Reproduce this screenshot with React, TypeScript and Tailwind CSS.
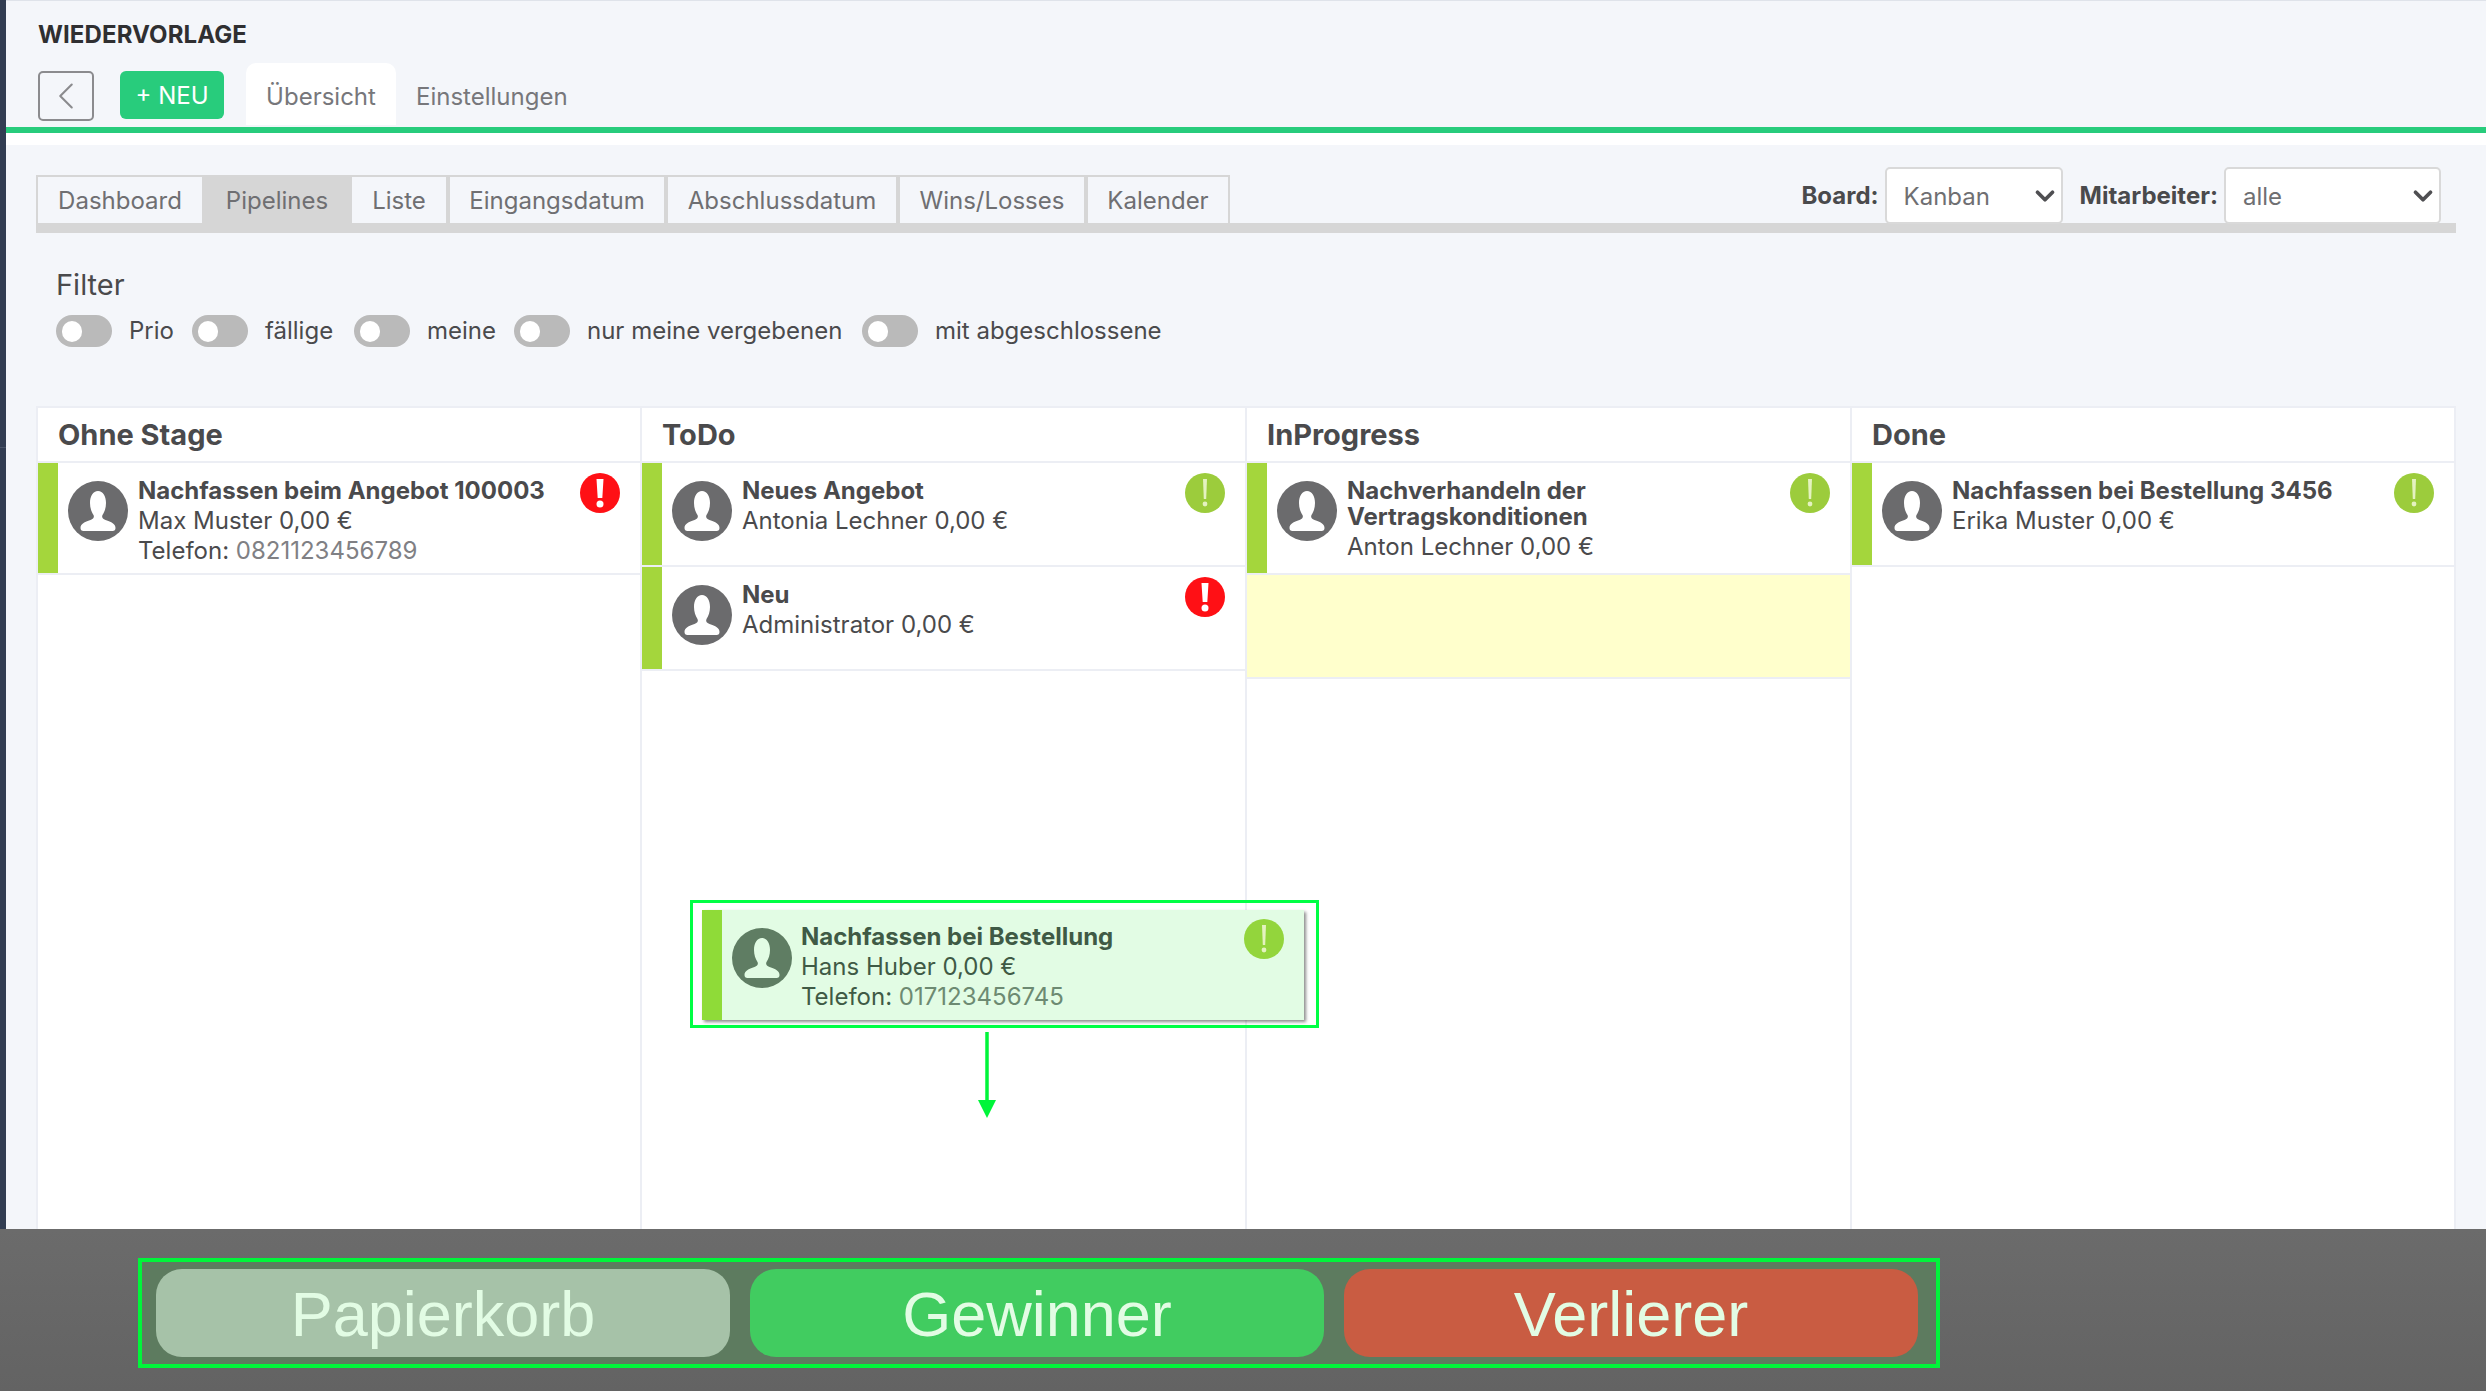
import { ChevronDown, ChevronLeft } from "lucide-react";

const mainTabs = [
  { label: "Dashboard", cls: "w-[164px] bg-[#f4f6fa]" },
  { label: "Pipelines", cls: "w-[150px] bg-[#d6d6d6]" },
  { label: "Liste", cls: "w-[94px] mr-[4px] bg-[#f4f6fa]" },
  { label: "Eingangsdatum", cls: "w-[214px] mr-[4px] bg-[#f4f6fa]" },
  { label: "Abschlussdatum", cls: "w-[228px] mr-[4px] bg-[#f4f6fa]" },
  { label: "Wins/Losses", cls: "w-[184px] mr-[4px] bg-[#f4f6fa]" },
  { label: "Kalender", cls: "w-[140px] bg-[#f4f6fa]" },
];

const filters = [
  { label: "Prio", cls: "w-[63px]" },
  { label: "fällige", cls: "w-[89px]" },
  { label: "meine", cls: "w-[87px]" },
  { label: "nur meine vergebenen", cls: "w-[275px]" },
  { label: "mit abgeschlossene", cls: "" },
];

type CardData = {
  title: string;
  person: string;
  phone?: string;
  urgent?: boolean;
  tall?: boolean;
};

const columns: { name: string; cards: CardData[]; drop?: boolean }[] = [
  {
    name: "Ohne Stage",
    cards: [
      { title: "Nachfassen beim Angebot 100003", person: "Max Muster 0,00 €", phone: "0821123456789", urgent: true, tall: true },
    ],
  },
  {
    name: "ToDo",
    cards: [
      { title: "Neues Angebot", person: "Antonia Lechner 0,00 €" },
      { title: "Neu", person: "Administrator 0,00 €", urgent: true },
    ],
  },
  {
    name: "InProgress",
    cards: [{ title: "Nachverhandeln der Vertragskonditionen", person: "Anton Lechner 0,00 €", tall: true }],
    drop: true,
  },
  {
    name: "Done",
    cards: [{ title: "Nachfassen bei Bestellung 3456", person: "Erika Muster 0,00 €" }],
  },
];

function Avatar({ fill = "#6b6b6d", cut = "#ffffff" }: { fill?: string; cut?: string }) {
  return (
    <svg viewBox="0 0 60 60" className="w-[60px] h-[60px] shrink-0">
      <circle cx="30" cy="30" r="30" fill={fill} />
      <path
        d="M30 10c-5 0-8 5-8 12 0 5 1.500 9 3.500 12 1 2 0 4-3 5-6 2-10 4-10 8 0 2 1 3 3 3h29c2 0 3-1 3-3 0-4-4-6-10-8-3-1-4-3-3-5 2-3 3.500-7 3.500-12 0-7-3-12-8-12z"
        fill={cut}
      />
    </svg>
  );
}

function Alert({ color, bold }: { color: string; bold?: boolean }) {
  return (
    <svg viewBox="0 0 40 40" className="w-[40px] h-[40px] shrink-0">
      <circle cx="20" cy="20" r="20" fill={color} />
      {bold ? (
        <>
          <path d="M16.500 6h7l-1.200 19h-4.600z" fill="#ffffff" />
          <circle cx="20" cy="31" r="3.500" fill="#ffffff" />
        </>
      ) : (
        <>
          <path d="M18 6h4l-.8 20h-2.400z" fill="#e4f2c0" />
          <circle cx="20" cy="31" r="2.400" fill="#e4f2c0" />
        </>
      )}
    </svg>
  );
}

function Card({ card }: { card: CardData }) {
  return (
    <div className={`flex bg-white border-b-2 border-[#eceef4] ${card.tall ? "h-[112px]" : "h-[104px]"}`}>
      <div className="w-[20px] bg-[#a4d63c]" />
      <div className="ml-[10px] mt-[18px]">
        <Avatar />
      </div>
      <div className="ml-[10px] mt-[15px] flex-1 text-[24px] leading-[29.5px] text-[#4a4a4c]">
        <div className="font-bold leading-[26px] mb-[2px] max-w-[420px]">{card.title}</div>
        <div>{card.person}</div>
        {card.phone && (
          <div>
            Telefon: <span className="text-[#808084]">{card.phone}</span>
          </div>
        )}
      </div>
      <div className="mt-[10px] mr-[20px]">
        <Alert color={card.urgent ? "#ff1015" : "#9ccc3c"} bold={card.urgent} />
      </div>
    </div>
  );
}

function DragCard() {
  return (
    <div className="absolute left-[652px] top-[492px] w-[629px] h-[128px] border-[3px] border-[#00ff44] pl-[9px] pt-[7px]">
      <div className="flex w-[602px] h-[110px] bg-[#e2fce4] shadow-[2px_2px_3px_rgba(0,0,0,0.45)]">
        <div className="w-[20px] bg-[#8fdb38]" />
        <div className="ml-[10px] mt-[18px]">
          <Avatar fill="#5f7d63" cut="#e2fce4" />
        </div>
        <div className="ml-[9px] mt-[14px] flex-1 text-[24px] leading-[29.5px] text-[#3f5a45]">
          <div className="font-bold leading-[26px] mb-[2px]">Nachfassen bei Bestellung</div>
          <div>Hans Huber 0,00 €</div>
          <div>
            Telefon: <span className="text-[#6d8a72]">017123456745</span>
          </div>
        </div>
        <div className="mt-[9px] mr-[20px]">
          <Alert color="#93d53c" />
        </div>
      </div>
    </div>
  );
}

function Toggle() {
  return (
    <span className="flex items-center w-[56px] h-[32px] rounded-full bg-[#bababa] pl-[6px]">
      <span className="w-[20px] h-[21px] rounded-full bg-white" />
    </span>
  );
}

function SelectBox({ value, cls }: { value: string; cls: string }) {
  return (
    <div className={`relative h-[57px] ${cls}`}>
      <select
        defaultValue={value}
        className="appearance-none w-full h-full bg-white border-2 border-[#d9d9d9] rounded-[5px] pl-[17px] pt-[2px] text-[24px] text-[#6f6f72] outline-none"
      >
        <option>{value}</option>
      </select>
      <ChevronDown
        className="absolute right-[3px] top-[14px] w-[30px] h-[30px] text-[#4f4f52] pointer-events-none"
        strokeWidth={3}
      />
    </div>
  );
}

export default function App() {
  return (
    <div className="relative h-[1391px] w-[2486px] overflow-hidden flex flex-col bg-[#f4f6fa] font-['Inter',sans-serif] antialiased">
      <div className="flex flex-1 min-h-0">
        <div className="w-[6px] shrink-0 bg-[#323d52]">
          <div className="h-[448px] border-b border-[#4a5468]" />
        </div>
        <div className="flex-1 min-w-0 overflow-hidden">
          <div className="border-t border-[#dfe3ea] h-[63px] pl-[32px] pt-[18px]">
            <h1 className="text-[24px] leading-[32px] font-bold text-[#2f2f31] tracking-[0.1px]">WIEDERVORLAGE</h1>
          </div>

          <div className="flex items-end h-[64px] pl-[32px] text-[24px]">
            <button className="flex items-center justify-center w-[56px] h-[50px] mb-[6px] rounded-[5px] border-2 border-[#8b8b8e] text-[#8b8b8e]">
              <ChevronLeft className="w-[46px] h-[46px] shrink-0" strokeWidth={1.1} />
            </button>
            <button className="w-[104px] h-[48px] mb-[8px] ml-[26px] pt-[2px] rounded-[6px] bg-[#28cc7c] text-white">+ NEU</button>
            <div className="flex items-center justify-center w-[150px] h-[62px] mb-[2px] ml-[22px] pt-[5px] rounded-t-[10px] bg-white text-[#77777b]">
              Übersicht
            </div>
            <div className="mb-[2px] h-[62px] pt-[5px] flex items-center ml-[20px] text-[#77777b]">Einstellungen</div>
          </div>
          <div className="h-[6px] bg-[#28cc7c]" />
          <div className="h-[12px] bg-white" />

          <div className="ml-[30px] mr-[30px] mt-[12px] flex items-end justify-between border-b-[10px] border-[#d6d6d6] h-[76px]">
            <div className="flex h-[48px] border-t-2 border-x-2 border-[#d6d6d6] bg-[#d6d6d6] text-[24px] text-[#6f6f72]">
              {mainTabs.map((t) => (
                <div key={t.label} className={`flex items-center justify-center pt-[2px] ${t.cls}`}>
                  {t.label}
                </div>
              ))}
            </div>
            <div className="flex items-center -mb-[1px] mr-[15px] text-[24px] text-[#4a4a4c]">
              <span className="font-bold mr-[6px]">Board:</span>
              <SelectBox value="Kanban" cls="w-[178px]" />
              <span className="font-bold ml-[17px] mr-[6px]">Mitarbeiter:</span>
              <SelectBox value="alle" cls="w-[217px]" />
            </div>
          </div>

          <div className="ml-[50px] h-[173px] pt-[34px]">
            <div className="text-[29px] leading-[36px] text-[#4a4a4c]">Filter</div>
            <div className="flex mt-[10px] text-[24px] text-[#4a4a4c]">
              {filters.map((f) => (
                <label key={f.label} className="flex items-center shrink-0">
                  <Toggle />
                  <span className={`ml-[17px] ${f.cls}`}>{f.label}</span>
                </label>
              ))}
            </div>
          </div>

          <div className="relative ml-[30px] mr-[30px] grid grid-cols-[604px_605px_605px_1fr] h-[900px] border-t-2 border-l-2 border-[#eceef4] bg-white">
            {columns.map((col) => (
              <div key={col.name} className="border-r-2 border-[#eceef4]">
                <div className="h-[55px] pl-[20px] border-b-2 border-[#eceef4] flex items-center text-[29px] font-bold text-[#4a4a4c]">
                  {col.name}
                </div>
                {col.cards.map((c) => (
                  <Card key={c.title} card={c} />
                ))}
                {col.drop && <div className="h-[104px] bg-[#ffffcc] border-b-2 border-[#eceef4]" />}
              </div>
            ))}
            <DragCard />
            <svg viewBox="0 0 18 86" className="absolute left-[940px] top-[624px] w-[18px] h-[86px]">
              <path d="M9 0v70" stroke="#00f53a" strokeWidth="3.5" fill="none" />
              <path d="M0 68h18l-9 18z" fill="#00f53a" />
            </svg>
          </div>
        </div>
      </div>

      <div className="h-[162px] shrink-0 pt-[29px] pl-[138px] bg-linear-to-b from-[#6b6b6b] to-[#636363] font-['Liberation_Sans',sans-serif]">
        <div className="flex gap-[20px] w-[1802px] h-[110px] border-4 border-[#00f53a] bg-[#5d7b5f] pl-[14px] py-[7px] text-[63px] text-[#e2fce4]">
          <div className="flex items-center justify-center w-[574px] pt-[2px] rounded-[26px] bg-[#a6c2a8]">Papierkorb</div>
          <div className="flex items-center justify-center w-[574px] pt-[2px] rounded-[26px] bg-[#41cc60]">Gewinner</div>
          <div className="flex items-center justify-center w-[574px] pt-[2px] rounded-[26px] bg-[#c95c42]">Verlierer</div>
        </div>
      </div>
    </div>
  );
}
